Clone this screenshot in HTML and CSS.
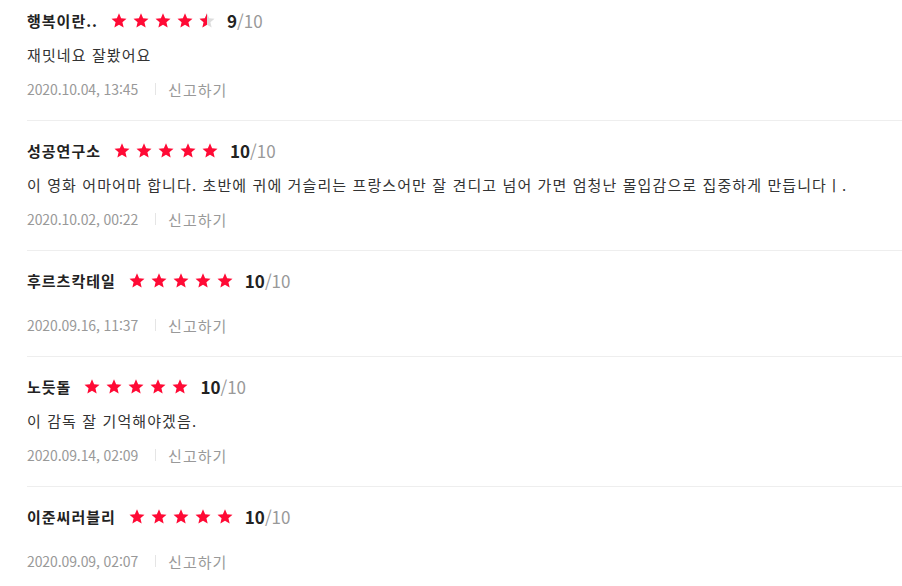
FILE: index.html
```html
<!DOCTYPE html>
<html lang="ko">
<head>
    <meta charset="UTF-8">
    <meta name="viewport" content="width=device-width, initial-scale=1.0">
    <title>평점</title>
    <link rel="stylesheet" href="styles.css">
</head>
<body>
    <svg width="0" height="0" class="defs">
        <defs>
            <path id="star" d="M7.5 0 L9.62 4.99 L15 5.46 L10.92 9.01 L12.14 14.29 L7.5 11.5 L2.86 14.29 L4.08 9.01 L0 5.46 L5.38 4.99 Z"/>
            <clipPath id="halfClip"><rect x="-1" y="-1" width="8.5" height="17"/></clipPath>
        </defs>
    </svg>

    <ul class="review-list">
        <li class="review">
            <div class="review-head">
                <strong class="nick">행복이란..</strong>
                <span class="stars">
                    <svg class="star" viewBox="-0.5 -0.3 16 15"><use href="#star"/></svg>
                    <svg class="star" viewBox="-0.5 -0.3 16 15"><use href="#star"/></svg>
                    <svg class="star" viewBox="-0.5 -0.3 16 15"><use href="#star"/></svg>
                    <svg class="star" viewBox="-0.5 -0.3 16 15"><use href="#star"/></svg>
                    <svg class="star" viewBox="-0.5 -0.3 16 15">
                        <use href="#star" class="star-empty"/>
                        <use href="#star" clip-path="url(#halfClip)"/>
                    </svg>
                </span>
                <span class="score"><em>9</em>/10</span>
            </div>
            <p class="comment">재밋네요 잘봤어요</p>
            <div class="review-info">
                <span class="date">2020.10.04, 13:45</span>
                <span class="divider"></span>
                <a href="#" class="report">신고하기</a>
            </div>
        </li>
        <li class="review">
            <div class="review-head">
                <strong class="nick">성공연구소</strong>
                <span class="stars">
                    <svg class="star" viewBox="-0.5 -0.3 16 15"><use href="#star"/></svg>
                    <svg class="star" viewBox="-0.5 -0.3 16 15"><use href="#star"/></svg>
                    <svg class="star" viewBox="-0.5 -0.3 16 15"><use href="#star"/></svg>
                    <svg class="star" viewBox="-0.5 -0.3 16 15"><use href="#star"/></svg>
                    <svg class="star" viewBox="-0.5 -0.3 16 15"><use href="#star"/></svg>
                </span>
                <span class="score"><em>10</em>/10</span>
            </div>
            <p class="comment">이 영화 어마어마 합니다. 초반에 귀에 거슬리는 프랑스어만 잘 견디고 넘어 가면 엄청난 몰입감으로 집중하게 만듭니다ㅣ.</p>
            <div class="review-info">
                <span class="date">2020.10.02, 00:22</span>
                <span class="divider"></span>
                <a href="#" class="report">신고하기</a>
            </div>
        </li>
        <li class="review">
            <div class="review-head">
                <strong class="nick">후르츠칵테일</strong>
                <span class="stars">
                    <svg class="star" viewBox="-0.5 -0.3 16 15"><use href="#star"/></svg>
                    <svg class="star" viewBox="-0.5 -0.3 16 15"><use href="#star"/></svg>
                    <svg class="star" viewBox="-0.5 -0.3 16 15"><use href="#star"/></svg>
                    <svg class="star" viewBox="-0.5 -0.3 16 15"><use href="#star"/></svg>
                    <svg class="star" viewBox="-0.5 -0.3 16 15"><use href="#star"/></svg>
                </span>
                <span class="score"><em>10</em>/10</span>
            </div>
            <p class="comment"></p>
            <div class="review-info">
                <span class="date">2020.09.16, 11:37</span>
                <span class="divider"></span>
                <a href="#" class="report">신고하기</a>
            </div>
        </li>
        <li class="review">
            <div class="review-head">
                <strong class="nick">노듯돌</strong>
                <span class="stars">
                    <svg class="star" viewBox="-0.5 -0.3 16 15"><use href="#star"/></svg>
                    <svg class="star" viewBox="-0.5 -0.3 16 15"><use href="#star"/></svg>
                    <svg class="star" viewBox="-0.5 -0.3 16 15"><use href="#star"/></svg>
                    <svg class="star" viewBox="-0.5 -0.3 16 15"><use href="#star"/></svg>
                    <svg class="star" viewBox="-0.5 -0.3 16 15"><use href="#star"/></svg>
                </span>
                <span class="score"><em>10</em>/10</span>
            </div>
            <p class="comment">이 감독 잘 기억해야겠음.</p>
            <div class="review-info">
                <span class="date">2020.09.14, 02:09</span>
                <span class="divider"></span>
                <a href="#" class="report">신고하기</a>
            </div>
        </li>
        <li class="review">
            <div class="review-head">
                <strong class="nick">이준씨러블리</strong>
                <span class="stars">
                    <svg class="star" viewBox="-0.5 -0.3 16 15"><use href="#star"/></svg>
                    <svg class="star" viewBox="-0.5 -0.3 16 15"><use href="#star"/></svg>
                    <svg class="star" viewBox="-0.5 -0.3 16 15"><use href="#star"/></svg>
                    <svg class="star" viewBox="-0.5 -0.3 16 15"><use href="#star"/></svg>
                    <svg class="star" viewBox="-0.5 -0.3 16 15"><use href="#star"/></svg>
                </span>
                <span class="score"><em>10</em>/10</span>
            </div>
            <p class="comment"></p>
            <div class="review-info">
                <span class="date">2020.09.09, 02:07</span>
                <span class="divider"></span>
                <a href="#" class="report">신고하기</a>
            </div>
        </li>
    </ul>
</body>
</html>
```
FILE: styles.css
```css
body {
    margin: 0;
    background-color: #ffffff;
    font-family: "Noto Sans CJK KR", "Noto Sans", sans-serif;
    color: #333;
}
.defs {
    position: absolute;
}
.review-list {
    list-style: none;
    margin: 0 0 0 27px;
    padding: 0;
}
.review {
    display: flex;
    flex-direction: column;
    padding: 17px 0 19px;
    border-bottom: 1px solid #eeeeee;
}
.review:first-child {
    padding-top: 8px;
}
.review-head {
    display: flex;
    align-items: center;
    height: 24px;
}
.nick {
    font-size: 15px;
    font-weight: bold;
    letter-spacing: 1px;
    color: #222;
    margin-right: 13px;
}
.stars {
    display: flex;
    gap: 6px;
    margin-right: 12px;
}
.star {
    width: 16px;
    height: 15px;
    fill: #ff0a35;
}
.star .star-empty {
    fill: #dddddd;
}
.score {
    font-size: 17px;
    color: #999;
}
.score em {
    font-style: normal;
    font-weight: bold;
    color: #222;
}
.comment {
    margin: 11px 0 10px;
    font-size: 15px;
    line-height: 24px;
    letter-spacing: 1.1px;
    color: #333;
}
.review-info {
    display: flex;
    align-items: center;
    height: 24px;
    font-size: 14px;
    color: #999;
}
.date {
    letter-spacing: -0.1px;
}
.divider {
    width: 1px;
    height: 12px;
    background-color: #e5e5e5;
    margin: 0 12px 0 17px;
}
.report {
    font-size: 15px;
    letter-spacing: 1px;
    color: #999;
    text-decoration: none;
}
```
